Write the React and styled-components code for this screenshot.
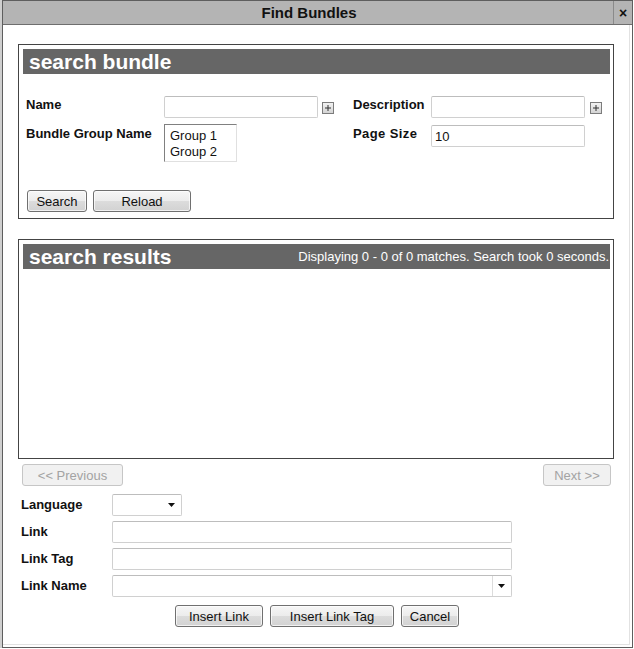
import React from "react";
import styled, { createGlobalStyle } from "styled-components";

const GlobalStyle = createGlobalStyle`
  html, body {
    margin: 0;
    padding: 0;
    background: #fff;
    font-family: "Liberation Sans", Arial, sans-serif;
  }
`;

const Window = styled.div`
  box-sizing: border-box;
  width: 631px;
  height: 648px;
  margin-left: 2px;
  border: 1px solid #5e5e5e;
  display: flex;
  flex-direction: column;
  box-shadow: -2px 0 0 #cfcfcf;
`;

const TitleBar = styled.div`
  box-sizing: border-box;
  height: 24px;
  background: #b4b4b4;
  border-bottom: 1px solid #6e6e6e;
  display: flex;
  align-items: center;
`;

const Title = styled.div`
  flex: 1;
  text-align: center;
  font-weight: bold;
  font-size: 15px;
  color: #111;
  padding-left: 2px;
`;

const CloseBtn = styled.div`
  width: 18px;
  height: 23px;
  border-left: 1px solid #8a8a8a;
  display: flex;
  align-items: center;
  justify-content: center;
  font-weight: bold;
  font-size: 14px;
  color: #111;
`;

const Body = styled.div`
  flex: 1;
  box-sizing: border-box;
  margin: 0 2px 2px 0;
  border-right: 1px solid #e2e2e2;
  border-bottom: 1px solid #e2e2e2;
  padding: 19px 0 0 15px;
  display: flex;
  flex-direction: column;
`;

const Panel = styled.div`
  box-sizing: border-box;
  width: 596px;
  height: ${p => p.h}px;
  border: 1px solid #444;
  padding: 4px 3px 0 4px;
  margin-bottom: ${p => p.mb || 0}px;
`;

const PanelHeader = styled.div`
  height: 25px;
  background: #666;
  color: #fff;
  display: flex;
  align-items: center;
  justify-content: space-between;
  padding: 0 1px 0 6px;
`;

const HeaderTitle = styled.span`
  font-size: 21px;
  font-weight: bold;
`;

const HeaderInfo = styled.span`
  font-size: 13px;
`;

const SearchGrid = styled.div`
  display: grid;
  grid-template-columns: 138px 154px 35px 78px 154px 20px;
  grid-auto-rows: auto;
  row-gap: 6px;
  margin: 22px 0 0 3px;
`;

const Label = styled.div`
  font-size: 13px;
  font-weight: bold;
  color: #111;
  line-height: 15px;
  padding-top: ${p => p.pt ?? 1}px;
  letter-spacing: ${p => p.ls || 0}px;
`;

const TextInput = styled.div`
  box-sizing: border-box;
  width: ${p => p.w || 154}px;
  height: ${p => p.h || 22}px;
  border: 1px solid #d0d0d0;
  border-top-color: #bdbdbd;
  border-radius: 2px;
  background: #fff;
  font-size: 13px;
  color: #111;
  padding: 3px 3px 0;
  margin-top: ${p => p.mt || 0}px;
  display: flex;
  align-items: flex-start;
`;

const ListBox = styled.div`
  box-sizing: border-box;
  width: 73px;
  height: 38px;
  border: 1px solid #e0e0e0;
  border-top-color: #808080;
  border-left-color: #808080;
  font-size: 13px;
  line-height: 16px;
  color: #111;
  padding: 3px 0 0 5px;
`;

const PlusCell = styled.div`
  display: flex;
  align-items: center;
  padding: 6px 0 0 ${p => p.pl}px;
  align-self: start;
`;

const ButtonRow = styled.div`
  display: flex;
  gap: ${p => p.gap || 5}px;
  justify-content: ${p => p.center ? "center" : "flex-start"};
  margin: ${p => p.m};
  width: ${p => p.w ? p.w + "px" : "auto"};
`;

const Button = styled.button`
  box-sizing: border-box;
  width: ${p => p.w}px;
  height: 22px;
  padding: 0;
  border: 1px solid ${p => p.disabled ? "#c6c6c6" : "#707070"};
  border-radius: 3px;
  background: ${p => p.disabled
    ? "#f1f1f1"
    : "linear-gradient(#f6f6f6 0%, #ececec 50%, #dcdcdc 51%, #d2d2d2 100%)"};
  box-shadow: ${p => p.disabled ? "none" : "inset 0 0 0 1px rgba(255,255,255,0.7)"};
  font-family: "Liberation Sans", Arial, sans-serif;
  font-size: 13px;
  color: ${p => p.disabled ? "#a3a3a3" : "#111"};
`;

const Pager = styled.div`
  width: 596px;
  box-sizing: border-box;
  display: flex;
  justify-content: space-between;
  padding: 5px 3px 0 4px;
`;

const LinkForm = styled.div`
  display: grid;
  grid-template-columns: 91px auto;
  row-gap: 5px;
  margin: 8px 0 0 3px;
  justify-items: start;
`;

const Select = styled(TextInput)`
  justify-content: flex-end;
  align-items: center;
  padding: 0;
`;

const ArrowBox = styled.div`
  width: 18px;
  height: 100%;
  display: flex;
  align-items: center;
  justify-content: center;
  border-left: ${p => p.sep ? "1px solid #dcdcdc" : "none"};
`;

function PlusIcon() {
  return (
    <svg width="12" height="12" viewBox="0 0 12 12">
      <defs>
        <linearGradient id="pg" x1="0" y1="0" x2="0" y2="1">
          <stop offset="0" stopColor="#f4f4f4" />
          <stop offset="1" stopColor="#d2d2d2" />
        </linearGradient>
      </defs>
      <rect x="0.5" y="0.5" width="11" height="11" fill="url(#pg)" stroke="#7c7c7c" />
      <path d="M3 6h6M6 3v6" stroke="#333" strokeWidth="1" />
    </svg>
  );
}

function Arrow() {
  return (
    <svg width="8" height="4" viewBox="0 0 8 4">
      <path d="M0 0h7l-3.5 4z" fill="#111" />
    </svg>
  );
}

export default function App() {
  return (
    <>
      <GlobalStyle />
      <Window>
        <TitleBar>
          <Title>Find Bundles</Title>
          <CloseBtn>×</CloseBtn>
        </TitleBar>
        <Body>
          <Panel h={175} mb={20}>
            <PanelHeader>
              <HeaderTitle>search bundle</HeaderTitle>
            </PanelHeader>
            <SearchGrid>
              <Label>Name</Label>
              <TextInput />
              <PlusCell pl={4}><PlusIcon /></PlusCell>
              <Label>Description</Label>
              <TextInput />
              <PlusCell pl={5}><PlusIcon /></PlusCell>

              <Label pt={2}>Bundle Group Name</Label>
              <ListBox>
                <div>Group 1</div>
                <div>Group 2</div>
              </ListBox>
              <div />
              <Label pt={2} ls={0.4}>Page Size</Label>
              <TextInput mt={1}>10</TextInput>
              <div />
            </SearchGrid>
            <ButtonRow gap={6} m="28px 0 0 4px">
              <Button w={60}>Search</Button>
              <Button w={98}>Reload</Button>
            </ButtonRow>
          </Panel>

          <Panel h={220}>
            <PanelHeader>
              <HeaderTitle>search results</HeaderTitle>
              <HeaderInfo>Displaying 0 - 0 of 0 matches. Search took 0 seconds.</HeaderInfo>
            </PanelHeader>
          </Panel>

          <Pager>
            <Button w={101} disabled>&lt;&lt; Previous</Button>
            <Button w={68} disabled>Next &gt;&gt;</Button>
          </Pager>

          <LinkForm>
            <Label pt={3}>Language</Label>
            <Select w={70}>
              <ArrowBox><Arrow /></ArrowBox>
            </Select>
            <Label pt={3}>Link</Label>
            <TextInput w={400} />
            <Label pt={3}>Link Tag</Label>
            <TextInput w={400} />
            <Label pt={3}>Link Name</Label>
            <Select w={400}>
              <ArrowBox sep><Arrow /></ArrowBox>
            </Select>
          </LinkForm>

          <ButtonRow center gap={7} m="8px 0 0 0" w={598}>
            <Button w={88}>Insert Link</Button>
            <Button w={124}>Insert Link Tag</Button>
            <Button w={58}>Cancel</Button>
          </ButtonRow>
        </Body>
      </Window>
    </>
  );
}
